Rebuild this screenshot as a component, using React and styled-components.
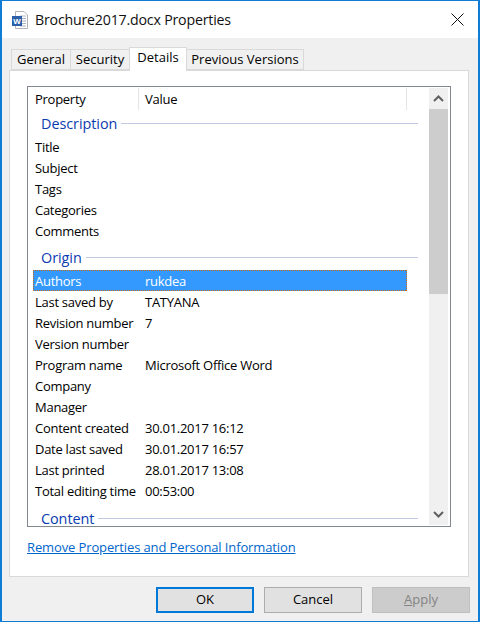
import React from "react";
import styled, { createGlobalStyle } from "styled-components";

const descriptionRows = ["Title", "Subject", "Tags", "Categories", "Comments"];
const originRows = [
  { name: "Authors", value: "rukdea", selected: true },
  { name: "Last saved by", value: "TATYANA" },
  { name: "Revision number", value: "7" },
  { name: "Version number", value: "" },
  { name: "Program name", value: "Microsoft Office Word" },
  { name: "Company", value: "" },
  { name: "Manager", value: "" },
  { name: "Content created", value: "30.01.2017 16:12" },
  { name: "Date last saved", value: "30.01.2017 16:57" },
  { name: "Last printed", value: "28.01.2017 13:08" },
  { name: "Total editing time", value: "00:53:00" },
];

function WordIcon() {
  return (
    <svg width="18" height="18" viewBox="0 0 18 18">
      <path d="M4.5 .5H13L16.5 4V17.5H4.5Z" fill="#fff" stroke="#b4b4b4" />
      <path d="M9 5h6M9 7.5h6M9 10h6M9 12.5h6M9 15h6" stroke="#a9b4c4" />
      <rect x="1" y="5" width="10" height="10" fill="#2b5fa8" />
      <text x="6" y="13" textAnchor="middle" fontFamily="Liberation Sans" fontSize="8" fontWeight="700" fill="#fff">W</text>
    </svg>
  );
}

function App() {
  return (
    <>
      <GlobalStyle />
      <Window>
        <TitleBar>
          <WordIcon />
          <Caption>Brochure2017.docx Properties</Caption>
          <CloseButton>
            <svg width="13" height="13" viewBox="0 0 13 13">
              <path d="M.5 .5l12 12M12.5 .5l-12 12" stroke="#111" fill="none" />
            </svg>
          </CloseButton>
        </TitleBar>
        <Body>
          <Tabs>
            <Tab $width={60}>General</Tab>
            <Tab $width={60}>Security</Tab>
            <Tab $width={58} $active>Details</Tab>
            <Tab $width={118}>Previous Versions</Tab>
          </Tabs>
          <Panel>
            <ListBox>
              <List>
                <HeaderRow>
                  <HeaderCell $width={106}>Property</HeaderCell>
                  <HeaderCell $width={268}>Value</HeaderCell>
                </HeaderRow>
                <Group>Description</Group>
                {descriptionRows.map((name) => (
                  <Row key={name}>
                    <span>{name}</span>
                    <span />
                  </Row>
                ))}
                <Group $space={3}>Origin</Group>
                {originRows.map((row) => (
                  <Row key={row.name} $selected={row.selected}>
                    <span>{row.name}</span>
                    <span>{row.value}</span>
                  </Row>
                ))}
                <Group $space={4}>Content</Group>
              </List>
              <ScrollBar>
                <ScrollButton>
                  <svg width="11" height="7" viewBox="0 0 11 7">
                    <path d="M1 6l4.5-4.5L10 6" stroke="#606060" strokeWidth="2" fill="none" />
                  </svg>
                </ScrollButton>
                <Thumb />
                <Track />
                <ScrollButton>
                  <svg width="11" height="7" viewBox="0 0 11 7">
                    <path d="M1 1l4.5 4.5L10 1" stroke="#606060" strokeWidth="2" fill="none" />
                  </svg>
                </ScrollButton>
              </ScrollBar>
            </ListBox>
            <RemoveLink href="#">Remove Properties and Personal Information</RemoveLink>
          </Panel>
          <Footer>
            <DialogButton $primary>OK</DialogButton>
            <DialogButton>Cancel</DialogButton>
            <DialogButton $disabled><u>A</u>pply</DialogButton>
          </Footer>
        </Body>
      </Window>
    </>
  );
}

const GlobalStyle = createGlobalStyle`
  html, body {
    margin: 0;
    padding: 0;
    background: #f0f0f0;
  }
  body {
    font-family: "Open Sans", "Noto Sans", sans-serif;
    font-size: 13px;
    color: #000;
  }
`;

const Window = styled.div`
  width: 480px;
  height: 622px;
  box-sizing: border-box;
  display: flex;
  flex-direction: column;
  border: 1px solid #0f7dd6;
  border-left-width: 2px;
  border-right-width: 2px;
  background: #f0f0f0;
`;

const TitleBar = styled.div`
  height: 37px;
  flex: none;
  display: flex;
  align-items: center;
  gap: 6px;
  padding: 0 14px 0 9px;
  background: #fff;
`;

const Caption = styled.div`
  flex: 1;
  font-size: 14.2px;
  letter-spacing: -0.2px;
  color: #111;
`;

const CloseButton = styled.div`
  display: flex;
`;

const Body = styled.div`
  flex: 1;
  display: flex;
  flex-direction: column;
  padding: 8px 8px 8px 7px;
`;

const Tabs = styled.div`
  display: flex;
  align-items: flex-end;
  height: 24px;
  padding-left: 3px;
  position: relative;
  z-index: 1;
`;

const Tab = styled.div`
  width: ${(p) => p.$width}px;
  height: ${(p) => (p.$active ? 24 : 21)}px;
  box-sizing: border-box;
  display: flex;
  justify-content: center;
  align-items: center;
  margin-bottom: ${(p) => (p.$active ? -1 : 0)}px;
  padding-bottom: ${(p) => (p.$active ? 5 : 2)}px;
  background: ${(p) => (p.$active ? "#fff" : "#f0f0f0")};
  border: 1px solid #d9d9d9;
  border-bottom: ${(p) => (p.$active ? "none" : "1px solid #d9d9d9")};
  margin-left: -1px;
  white-space: nowrap;
`;

const Panel = styled.div`
  height: 507px;
  flex: none;
  box-sizing: border-box;
  margin-right: 1px;
  border: 1px solid #d9d9d9;
  background: #fff;
  padding: 15px 17px 0;
`;

const ListBox = styled.div`
  height: 441px;
  box-sizing: border-box;
  display: flex;
  border: 1px solid #828790;
  padding: 1px 2px 1px 0;
`;

const List = styled.div`
  flex: 1;
  min-width: 0;
  padding-left: 5px;
  overflow: hidden;
  letter-spacing: -0.27px;
`;

const HeaderRow = styled.div`
  display: flex;
  height: 22px;
`;

const HeaderCell = styled.div`
  width: ${(p) => p.$width}px;
  box-sizing: border-box;
  padding: 2px 0 0 ${(p) => (p.$width > 200 ? 6 : 2)}px;
  border-right: 1px solid #e5e5e5;
`;

const Group = styled.div`
  width: 385px;
  height: 26px;
  margin-top: ${(p) => p.$space || 0}px;
  display: flex;
  align-items: center;
  gap: 4px;
  padding-left: 8px;
  box-sizing: border-box;
  color: #0a3bb0;
  font-size: 14.4px;
  letter-spacing: -0.05px;
  &::after {
    content: "";
    flex: 1;
    height: 1px;
    background: #c2c8e0;
  }
`;

const dots = "repeating-linear-gradient(90deg, #c9660f 0 1px, transparent 1px 2px)";
const dotsDown = "repeating-linear-gradient(0deg, #c9660f 0 1px, transparent 1px 2px)";

const Row = styled.div`
  width: 374px;
  height: 21px;
  box-sizing: border-box;
  display: grid;
  grid-template-columns: 110px 1fr;
  align-items: center;
  padding-left: 2px;
  white-space: nowrap;
  color: ${(p) => (p.$selected ? "#fff" : "#000")};
  background-color: ${(p) => (p.$selected ? "#3399ff" : "transparent")};
  background-image: ${(p) => (p.$selected ? `${dots}, ${dots}, ${dotsDown}, ${dotsDown}` : "none")};
  background-repeat: no-repeat;
  background-size: 100% 1px, 100% 1px, 1px 100%, 1px 100%;
  background-position: top, bottom, left, right;
`;

const ScrollBar = styled.div`
  width: 19px;
  flex: none;
  display: flex;
  flex-direction: column;
  background: #f0f0f0;
`;

const ScrollButton = styled.div`
  height: 21px;
  flex: none;
  display: flex;
  justify-content: center;
  align-items: center;
`;

const Thumb = styled.div`
  height: 185px;
  flex: none;
  background: #cdcdcd;
`;

const Track = styled.div`
  flex: 1;
`;

const RemoveLink = styled.a`
  display: inline-block;
  margin-top: 11px;
  color: #0066cc;
  letter-spacing: -0.12px;
`;

const Footer = styled.div`
  display: flex;
  justify-content: flex-end;
  gap: 10px;
  margin-top: 10px;
`;

const DialogButton = styled.div`
  width: 98px;
  height: 26px;
  box-sizing: border-box;
  display: flex;
  justify-content: center;
  align-items: center;
  padding-bottom: 2px;
  border: ${(p) => (p.$primary ? "2px solid #0078d7" : `1px solid ${p.$disabled ? "#bfbfbf" : "#adadad"}`)};
  background: ${(p) => (p.$disabled ? "#cccccc" : "#e1e1e1")};
  color: ${(p) => (p.$disabled ? "#838383" : "#000")};
  white-space: pre;
`;

export default App;
